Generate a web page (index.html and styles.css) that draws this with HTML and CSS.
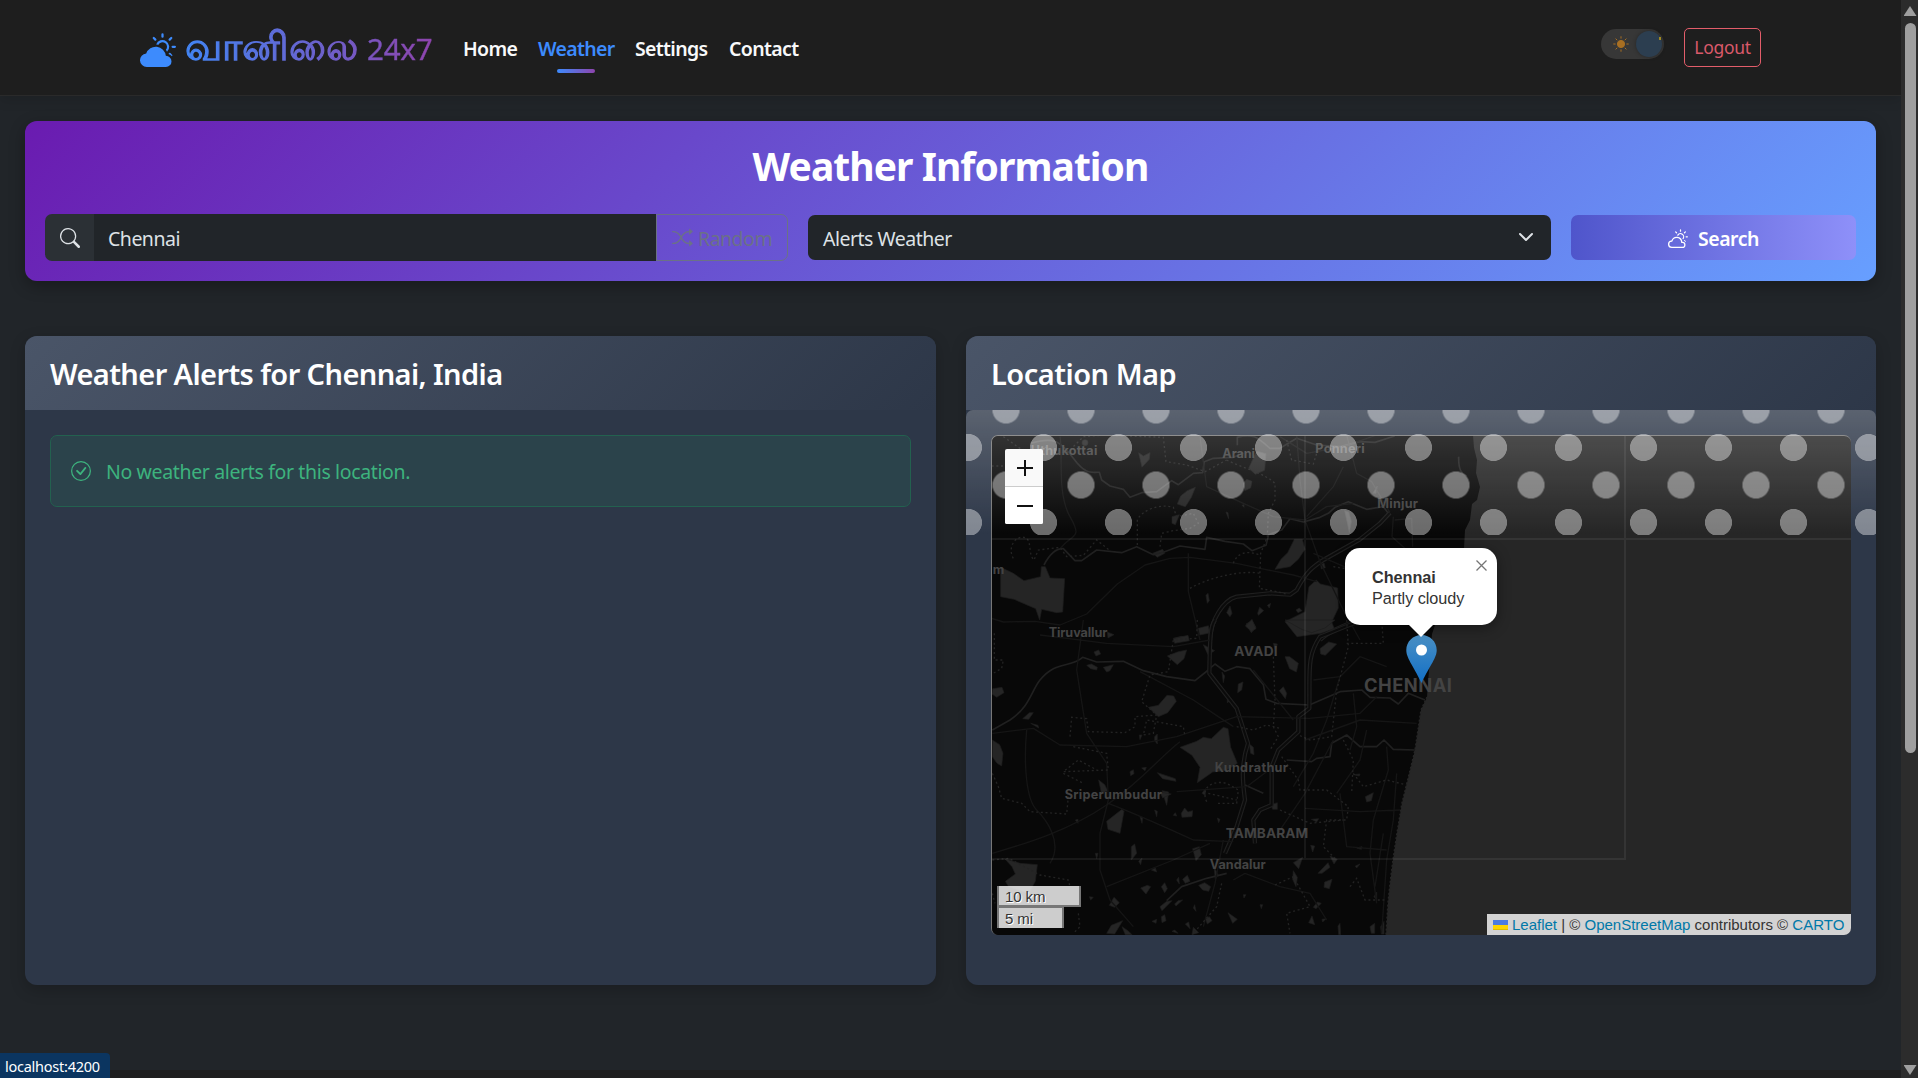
FILE: index.html
```html
<!DOCTYPE html>
<html lang="en">
<head>
<meta charset="utf-8">
<title>Weather Information</title>
<link rel="stylesheet" href="styles.css">
</head>
<body>
<svg class="defs" width="0" height="0" aria-hidden="true">
  <symbol id="sun-rays" viewBox="0 0 16 16">
    <path d="M10.5 1.5a.5.5 0 0 0-1 0v1a.5.5 0 0 0 1 0zm3.743 1.964a.5.5 0 1 0-.707-.707l-.708.707a.5.5 0 0 0 .708.708zm-7.779-.707a.5.5 0 0 0-.707.707l.707.708a.5.5 0 1 0 .708-.708zm1.734 3.374a2 2 0 1 1 3.296 2.198q.3.423.516.898a3 3 0 1 0-4.84-3.225q.529.017 1.028.129m4.484 4.074c.6.215 1.125.59 1.522 1.072a.5.5 0 0 0 .039-.742l-.707-.707a.5.5 0 0 0-.854.377M14.5 6.5a.5.5 0 0 0 0 1h1a.5.5 0 0 0 0-1z"/>
  </symbol>
</svg>
<div class="page">
  <header class="topbar">
    <a class="brand">
      <svg class="brand-icon" viewBox="0 0 16 16"><path d="M11.473 11a4.5 4.5 0 0 0-8.72-.99A3 3 0 0 0 3 16h8.5a2.5 2.5 0 0 0 0-5z"/><use href="#sun-rays"/></svg>
      <span class="brand-text"><span class="brand-tamil">வானிலை</span> <span class="brand-num">24x7</span></span>
    </a>
    <nav class="nav">
      <a class="nav-link home">Home</a>
      <a class="nav-link weather active">Weather</a>
      <a class="nav-link settings">Settings</a>
      <a class="nav-link contact">Contact</a>
    </nav>
    <div class="switch">
      <svg class="switch-sun" viewBox="0 0 16 16"><circle cx="8" cy="8" r="3.600"/><path d="M8 .3v2.300M8 13.400v2.300M.3 8h2.300M13.400 8h2.300M2.600 2.600l1.600 1.600M11.800 11.800l1.600 1.600M13.400 2.600l-1.600 1.600M4.200 11.800l-1.600 1.600"/></svg>
      <span class="switch-knob"></span>
      <span class="switch-star"></span>
    </div>
    <button class="logout">Logout</button>
  </header>

  <main class="content">
    <section class="banner">
      <h1 class="banner-title">Weather Information</h1>
      <div class="search-row">
        <div class="input-group">
          <span class="input-icon"><svg viewBox="0 0 16 16"><path d="M11.742 10.344a6.5 6.5 0 1 0-1.397 1.398h-.001q.044.06.098.115l3.85 3.85a1 1 0 0 0 1.415-1.414l-3.85-3.85a1 1 0 0 0-.115-.1zM12 6.5a5.5 5.5 0 1 1-11 0 5.5 5.5 0 0 1 11 0"/></svg></span>
          <span class="input-text">Chennai</span>
          <span class="random"><svg viewBox="0 0 16 16"><path d="M0 3.5A.5.5 0 0 1 .5 3H1c2.202 0 3.827 1.24 4.874 2.418.49.552.865 1.102 1.126 1.532.26-.43.636-.98 1.126-1.532C9.173 4.24 10.798 3 13 3v1c-1.798 0-3.173 1.01-4.126 2.082A9.6 9.6 0 0 0 7.556 8a9.6 9.6 0 0 0 1.317 1.918C9.828 10.99 11.204 12 13 12v1c-2.202 0-3.827-1.24-4.874-2.418A10.6 10.6 0 0 1 7 9.05c-.26.43-.636.98-1.126 1.532C4.827 11.76 3.202 13 1 13H.5a.5.5 0 0 1 0-1H1c1.798 0 3.173-1.01 4.126-2.082A9.6 9.6 0 0 0 6.444 8a9.6 9.6 0 0 0-1.317-1.918C4.172 5.01 2.796 4 1 4H.5a.5.5 0 0 1-.5-.5"/><path d="M13 5.466V1.534a.25.25 0 0 1 .41-.192l2.36 1.966c.12.1.12.284 0 .384l-2.36 1.966a.25.25 0 0 1-.41-.192m0 9v-3.932a.25.25 0 0 1 .41-.192l2.36 1.966c.12.1.12.284 0 .384l-2.36 1.966a.25.25 0 0 1-.41-.192"/></svg><span>Random</span></span>
        </div>
        <div class="select"><span>Alerts Weather</span><svg viewBox="0 0 16 16"><path d="m2 5 6 6 6-6"/></svg></div>
        <button class="search-btn"><svg viewBox="0 0 16 16"><path d="M7 8a3.5 3.5 0 0 1 3.5 3.555.5.5 0 0 0 .624.492A1.503 1.503 0 0 1 13 13.5a1.5 1.5 0 0 1-1.5 1.5H3a2 2 0 1 1 .1-3.998.5.5 0 0 0 .51-.375A3.5 3.5 0 0 1 7 8m4.473 3a4.5 4.5 0 0 0-8.72-.99A3 3 0 0 0 3 16h8.5a2.5 2.5 0 0 0 0-5z"/><use href="#sun-rays"/></svg><span>Search</span></button>
      </div>
    </section>

    <div class="cards">
      <section class="card">
        <h2 class="card-head alerts-title"><span>Weather Alerts for Chennai, India</span></h2>
        <div class="card-body">
          <div class="alert"><svg viewBox="0 0 16 16"><path d="M8 15A7 7 0 1 1 8 1a7 7 0 0 1 0 14m0 1A8 8 0 1 0 8 0a8 8 0 0 0 0 16"/><path d="m10.97 4.97-.02.022-3.473 4.425-2.093-2.094a.75.75 0 0 0-1.06 1.06L6.97 11.03a.75.75 0 0 0 1.079-.02l3.992-4.99a.75.75 0 0 0-1.071-1.05"/></svg><span>No weather alerts for this location.</span></div>
        </div>
      </section>

      <section class="card">
        <h2 class="card-head map-title"><span>Location Map</span></h2>
        <div class="card-body map-body">
          <div class="map">
            <svg class="map-canvas" viewBox="991 435 860 500">
              <path class="land" d="M991 435H1473L1474 448 1477 460 1476 473 1480 487 1477 500 1472 504 1470 520 1465 530 1464 548 1450 585 1436 622 1432 634 1429 670 1427 697 1421 710 1415 750 1407 783 1402 803 1397 833 1393 860 1390 884 1388 903 1386 935H991Z"/>
              <path class="shore" d="M1427 697 1421 710 1415 750 1407 783 1402 803 1397 833 1393 860 1390 884 1388 903 1386 935"/>
              <g transform="translate(960 320) scale(.33333)">
                <g class="lake">
                  <path d="M122 742l38 18 32 22 50-12 2-30 12 0 14 34 44 2-6 100-18 2-45-10-6 32-12-34-65-28-40-8z"/>
                  <path d="M945 748l18-30 20-20 20-40 24 0 8 30-20 30-25 22z"/>
                  <path d="M975 905l60-30 12-75 22-20 12 12 52 12 2 60-20 42 8 20-40 14-72 10z"/>
                  <path d="M652 552l10-24 20-16 24-10-12 30-18 28z"/>
                  <path d="M866 445l24-52 28 8-4 50-28 12zM536 398l14 10 20-10-2 20-22 24zM850 490l10-12 16 6-4 20-18 8zM636 590l22-6-12 30-10-4zM1238 520l14-22-4 22z"/>
                  <path d="M1154 572l12 4 8 28-6 34-6-30z"/>
                  <path d="M800 878l10-20 6 22-6 10zM858 912l18-10 12 20-14 16zM893 880l6-18 12 10-16 14zM738 826l6-6 4 22-6 8zM922 856l10-6-4 14zM715 925l30-8 4 22-30 6zM1008 870l10-6 8 8-12 6zM1082 735l10-6 4 14-12 4zM798 576l6 2 2 18zM846 556l6-2v8zM640 955l24-6 20 4v7z"/>
                  <circle cx="375" cy="368" r="9"/><path d="M578 700l30-12 6 12-22 12z"/>
                </g>
                <g class="river">
                  <path d="M210 370C280 350 300 360 340 415S400 455 418 457L425 480 450 498 490 508 510 532 545 518 590 515 635 482 655 494 700 460 728 458 733 425 760 415 820 412 850 400"/>
                  <path d="M252 735C270 700 290 685 310 686L345 722 365 722 410 690 485 698 530 680 580 704 612 696 660 678 735 688 740 652 795 664 850 672 876 692 918 676 926 644 965 630 990 596 1030 606 1080 592 1105 580 1125 562 1165 545 1220 568 1270 560 1285 580"/>
                  <path d="M830 352C880 340 890 350 930 385H960L1010 355 1070 375 1140 380 1200 365 1245 367 1304 348M832 352v24M1496 410C1495 450 1505 462 1520 468"/>
                </g>
                <g class="road-double">
                  <path d="M750 960C752 900 790 840 830 830L930 820 990 824 1010 810C1040 752 1060 740 1090 720L1200 658 1260 610 1290 578M1080 960C1110 930 1160 915 1225 885"/>
                </g>
                <g class="road-core">
                  <path d="M750 960C752 900 790 840 830 830L930 820 990 824 1010 810C1040 752 1060 740 1090 720L1200 658 1260 610 1290 578M1080 960C1110 930 1160 915 1225 885"/>
                </g>
                <g class="road">
                  <path d="M300 350C310 400 290 520 330 590S335 640 300 686M685 700v115L720 960M690 815M95 895L130 906 225 904 300 915L380 882 472 792 555 735 630 715 690 712 830 730 900 745 1000 765 1070 785"/>
                  <path d="M1010 345L1020 480 1035 600 1080 725 1150 870 1200 960M720 350L740 500 850 550 940 590 1035 600 1100 560 1180 550M1060 700L1200 760 1300 790M960 350L1040 400 1150 380 1250 345M1160 345L1190 460 1235 485 1290 578M1040 590L1120 500 1150 440"/>
                </g>
                <g class="boundary">
                  <path d="M130 350L180 385 210 410 250 380 320 400 370 350 430 345 610 352 618 425 680 435 735 455 800 420"/>
                  <path d="M95 438h50M160 715C140 680 170 640 200 655 215 670 205 705 222 720L235 690 300 682 320 710 370 706 410 660 450 692"/>
                  <path d="M532 675V600C545 570 600 550 640 562L650 590 700 580 715 610 690 625 640 632 605 640 600 680"/>
                  <path d="M800 420C850 445 915 460 945 490L945 540 925 580 922 650 902 700 898 805 950 815 980 822M820 730C830 700 860 690 895 704M690 805C750 770 850 750 900 760M980 360L995 420 1060 432 1070 400M1120 740l60 10"/>
                </g>
                <g class="road"><path d="M1300 590L1296 650 1340 690M1304 600L1355 595 1358 680"/></g>
                <g class="label">
                  <text x="212" y="404" font-size="38" textLength="200">Uthukottai</text>
                  <text x="787" y="414" font-size="38" textLength="98">Arani</text>
                  <text x="1066" y="399" font-size="38" textLength="148">Ponneri</text>
                  <text x="1252" y="565" font-size="38" textLength="122">Minjur</text>
                  <text x="98" y="763" font-size="38">m</text>
                </g>
              </g>
              <g transform="translate(960 620) scale(.33333)">
                <g class="lake">
                  <path d="M660 382l50-18 20-12 24 4 36-34 14 4 8 56 20 48-34 22-40 4-46 32 8-46-24-36z"/>
                  <path d="M565 262l30-6 26-30 20 2 8 16-26 34-28 12zM97 360l22 14 10 26-4 38-14-8-14-20z"/>
                  <path d="M440 604l46-36 6 6-12 66-36-12zM134 716l46 14 52 4-6 50-20 36-60-20-10-16 30-22-10-22z"/>
                  <path d="M98 206l28-4 6 16-22 14-14-10zM188 296l20-18 12 0-14 20zM212 310l22 6 2 8zM380 136l14-4 18 10-2 8-18-4zM430 142l30-8-10 18-10 4zM402 96l14-6 6 12-14 6z"/>
                  <path d="M640 56l44-10 4 16-44 8zM622 108l30-12 28-6-8 26-20 18zM730 74l34 18-20 12zM856 18l20-20 12 28-14 8zM975 0h150l-30 24-40 14-30-10z"/>
                  <path d="M835 192l14-6-4 24-12 8zM958 212l12-12 10 20-4 16zM975 110l14 0 26 20-6 26-20-10zM1080 86l26-20 24 6-20 20-14 14-14-4zM786 156l8 12-4 20zM940 70l12 2-6 20zM802 230l6 14-6 4z"/>
                  <path d="M416 480l18 14 10 20-20 4zM510 455l10-6 2 12-10 6zM592 458l54 18 2 8-40-8zM545 444l14-2-4 10zM584 350l8-8v30l-8-10zM538 345l8 0-6 14zM664 580l10-16 10 12 14-4-2 18-30 2zM584 570l8 4-2 16zM540 590l8 2-2 18zM640 586l6-8 4 10zM606 512l20 4-6 40zM868 372l12 10 2 22-10-4zM772 594l8 4-4 10zM726 520l10-14v20z"/>
                  <path d="M514 680l10-8 6 28-16 20zM698 686l20-6 6 24-16 18zM536 724l10-10-4 20zM406 700l8 0-4 16zM346 600l8-2v12zM716 796l18-8 18 12-6 14-18-4zM650 780l6-8 2 20zM668 778l14-12 8 18-14 6zM542 804l20-8 10 4-14 22zM604 800l10-12 8 18-8 12zM574 750l12-6 4 12zM448 856l14-24 16 16-14 14zM388 830l12 2-8 8zM600 860l20-16 16-2-30 30zM644 852l10-10 14-2-20 18z"/>
                  <path d="M440 940l14-24 34-14-24 40zM486 920l20 14 10 10h-20zM576 904l14-6-2 12zM604 890l10-6 4 18-12 6zM636 934l8-4 10 10zM700 864l4-10 4 20zM736 896l12-6 8 12-14 10zM676 912l10-6 4 20zM804 878l28 20-14 12zM850 824l8 0-6 10zM900 854l8 0-4 12zM762 740l12 24-8 14zM700 922l16 16-20 6z"/>
                  <path d="M1000 728l28-16-12 34zM1000 752l12 20-4 28-10-22zM1052 676l12 2-6 18zM1074 760l30-32 6 14-24 18zM1094 786l22-8-8 28-16-4zM1110 708l22 10-10 14zM1190 684l16-4-2 8zM934 554l18-6v20h-14zM1054 598l22-2-6 10zM1216 530l24-12-6 24-14 4zM1180 464l20-2-2 6zM1060 862l12-16 12 4-16 16zM1046 908l10-20 8 26zM1086 898l12-2-10 10zM1134 918l6-8 2 34h-6zM1242 830l8-14v24zM1230 920l14-10v30h-10zM1262 920l10-16v38h-8zM1186 738l14-6-10 12z"/>
                  <path d="M442 36l20 8-18 10zM600 516l34 6-26 12z"/>
                </g>
                <g class="river">
                  <path d="M97 330L150 300C210 260 215 210 240 180 290 120 330 145 368 112L410 126 490 124 550 152 620 170 705 182 745 150 765 132 795 154 830 140 870 146 910 194 918 238 950 250 1048 255 1095 235 1140 215 1205 210 1230 232 1290 234 1315 252 1345 220 1395 240"/>
                  <path d="M980 420L1055 425 1070 415 1110 410 1115 370 1160 345 1200 380 1250 380 1272 360 1300 388 1365 390M620 842L665 800 740 775 800 760M855 495L910 520"/>
                </g>
                <g class="road-double">
                  <path d="M765 0C750 20 750 60 748 160L830 265 864 370C840 440 850 500 855 540L830 620 795 700M1210 0C1150 20 1110 40 1080 50 1040 110 1050 150 1048 265L1015 290V335L955 390 935 440V555L900 570 880 600 885 670"/>
                </g>
                <g class="road-core">
                  <path d="M765 0C750 20 750 60 748 160L830 265 864 370C840 440 850 500 855 540L830 620 795 700M1210 0C1150 20 1110 40 1080 50 1040 110 1050 150 1048 265L1015 290V335L955 390 935 440V555L900 570 880 600 885 670"/>
                </g>
                <g class="road">
                  <path d="M370 0L350 150 380 340 440 430 445 540 420 640 420 750 450 840 520 920M240 45L440 70 640 80 750 60M540 155L700 240 820 320M97 340L220 325 300 375 500 380 650 350 830 290 1048 295 1200 280 1250 230"/>
                  <path d="M97 700C200 670 330 630 440 555S600 410 660 365M200 330C190 440 200 540 230 570S310 670 270 730M445 550C550 590 610 620 700 660L820 665M650 515L860 500 940 440M440 800L640 720 750 670M790 660L765 790M820 780L855 760 960 800 1050 820 1100 900M765 790 730 920"/>
                  <path d="M1060 180L1140 170 1200 110 1280 140M1140 170L1100 300 1060 400 1000 500M1180 220L1190 320 1170 390M1220 330L1200 420 1130 520M1035 565L1200 575 1320 570M1280 380L1285 450 1240 600 1230 700 1250 850M1310 460L1300 600 1280 720 1265 940M1270 640L1245 800M950 645L1035 520 1120 360M880 150L1000 300M1140 520L1160 680 1280 690M1035 360L1200 300 1370 310"/>
                </g>
                <g class="boundary">
                  <path d="M103 40V120H130L125 145 100 160M97 460L115 500 125 535 185 550 210 575 320 582 325 530M330 350L335 292 380 296 385 335 495 338 525 320 525 290 590 285 580 340 550 345 560 300 670 320 675 350M340 380L440 400 445 450 310 455 355 420 420 455M310 460L370 490"/>
                  <path d="M712 0L710 55 640 60 625 155 570 165 545 245 590 285M940 110L945 240 940 320 955 350 930 390M830 320L880 330 920 315 960 325M1160 0L1165 80 1130 210 1115 350 1050 360 1015 345M1160 70L1270 70 1265 0M740 545C720 500 760 480 800 490L835 510 830 550 770 550M965 410L1015 480 1020 510 1100 510 1165 560 1160 600 1100 600 1090 680 1130 720"/>
                  <path d="M1150 360L1180 420 1175 520M1180 460L1210 500 1280 480 1340 495M97 720L145 715 240 765 325 780 330 800M355 880L360 920 340 940M745 520L830 540M960 570L1050 610 1150 600M945 795L1000 770 1050 860 980 880 990 940M1170 800L1190 775 1215 840 1280 840M785 790L770 860 700 940M97 820L105 850"/>
                </g>
                <g class="label">
                  <text x="266" y="52" font-size="38" textLength="176">Tiruvallur</text>
                  <text x="823" y="108" font-size="41" textLength="130">AVADI</text>
                  <text x="1212" y="216" font-size="55" textLength="264">CHENNAI</text>
                  <text x="764" y="456" font-size="38" textLength="220">Kundrathur</text>
                  <text x="314" y="537" font-size="38" textLength="292">Sriperumbudur</text>
                  <text x="797" y="654" font-size="41" textLength="248">TAMBARAM</text>
                  <text x="749" y="746" font-size="38" textLength="168">Vandalur</text>
                </g>
              </g>
              <path class="seam" d="M1305 435V859M1625 435V859M991 539H1851M991 859H1626"/>
            </svg>
            <svg class="marker" viewBox="0 0 31 50"><defs><linearGradient id="pin" x1="0" y1="0" x2="0" y2="1"><stop offset="0" stop-color="#4a90c4"/><stop offset="1" stop-color="#126fc6"/></linearGradient></defs><path fill="url(#pin)" d="M15.500 1C7 1 .3 7.700.3 16c0 8 6 14 15.200 33C24.700 30 30.700 24 30.700 16 30.700 7.700 24 1 15.500 1z"/><circle cx="15.500" cy="16" r="5.500" fill="#fff"/></svg>
            <div class="popup">
              <b>Chennai</b><span>Partly cloudy</span>
              <svg class="popup-close" viewBox="0 0 11 11"><path d="M.5.5l10 10M10.500.5l-10 10"/></svg>
              <i class="popup-tip"></i>
            </div>
            <div class="scale"><span class="scale-km">10 km</span><span class="scale-mi">5 mi</span></div>
            <div class="attribution"><i class="flag"></i><a>Leaflet</a> | © <a>OpenStreetMap</a> contributors © <a>CARTO</a></div>
          </div>
          <div class="dots"></div>
          <div class="zoom">
            <span><svg viewBox="0 0 16 16"><path d="M0 8h16M8 0v16"/></svg></span>
            <span><svg viewBox="0 0 16 16"><path d="M0 8h16"/></svg></span>
          </div>
        </div>
      </section>
    </div>
  </main>
  <footer class="footer"></footer>
</div>
<div class="scrollbar"><i class="arrow-up"></i><i class="thumb"></i><i class="arrow-down"></i></div>
<div class="status">localhost:4200</div>
</body>
</html>
```
FILE: styles.css
```css
* { box-sizing: border-box; }
body {
  margin: 0; height: 1078px; display: flex; overflow: hidden; position: relative;
  background: #212529; color: #dee2e6;
  font-family: "Noto Sans", "Open Sans", sans-serif; font-size: 19.500px; letter-spacing: -.5px;
}
.defs { position: absolute; }
svg { fill: currentColor; flex: none; display: block; }
button { font: inherit; letter-spacing: inherit; margin: 0; padding: 0; }
.page { width: 1901px; display: flex; flex-direction: column; }

.topbar {
  height: 96px; padding: 0 140px; display: flex; align-items: center;
  background: #1e1e1e; border-bottom: 1px solid #2a2a2a; box-shadow: 0 4px 12px rgba(0,0,0,.12);
}
.brand { display: flex; align-items: center; width: 307px; height: 68px; margin-top: 2px; }
.brand-icon { width: 36px; height: 36px; color: #3d8bfd; margin-right: 9px; }
.brand-text {
  display: flex; align-items: baseline; gap: 9px; white-space: nowrap; line-height: 64px; margin-top: -4px;
  background: linear-gradient(90deg, #4285f4, #8e44ad); -webkit-background-clip: text; background-clip: text; color: transparent;
}
.brand-tamil { font-size: 39px; letter-spacing: 0; -webkit-text-stroke: 1.300px transparent; }
.brand-num { font-size: 29.500px; font-weight: 450; letter-spacing: -.2px; -webkit-text-stroke: .4px transparent; }
.nav { display: flex; gap: 20px; margin-left: 16px; align-self: stretch; }
.nav-link { position: relative; color: #f8f9fa; font-weight: 600; line-height: 97px; white-space: nowrap; letter-spacing: -.65px; }
.home { width: 55px; } .weather { width: 77px; } .settings { width: 74px; } .contact { width: 71px; }
.nav-link.active { color: #3d8bfd; }
.nav-link.active::after {
  content: ""; position: absolute; left: 19px; top: 69px; width: 38px; height: 4px; border-radius: 2px;
  background: linear-gradient(90deg, #3d8bfd, #8e44ad);
}
.switch {
  position: relative; width: 63px; height: 30px; margin: -8px 20px 0 auto; border-radius: 15px;
  background: #373737; display: flex; align-items: center; padding-left: 12px;
}
.switch-sun { width: 16px; height: 16px; color: #a86f22; stroke: currentColor; stroke-width: 1; }
.switch-knob { width: 26px; height: 26px; border-radius: 50%; background: #2c3e50; margin-left: 7px; box-shadow: 0 0 4px rgba(0,0,0,.3); }
.switch-star { position: absolute; left: 58px; top: 8px; width: 2px; height: 3px; background: #a08a22; }
.logout {
  width: 77px; height: 39px; border: 1px solid #e35d6a; border-radius: 5px; background: none; color: #d9596a;
  font-size: 17.500px; line-height: 37px; letter-spacing: -.3px;
}

.content { padding: 25px 25px 0; height: 974px; }
.banner {
  height: 160px; width: 1851px; border-radius: 12px; padding: 18px 20px 20px;
  background: linear-gradient(135deg, #6a1bb0, #679fff); box-shadow: 0 5px 16px rgba(0,0,0,.3);
}
.banner-title { margin: 0; height: 75px; line-height: 54px; text-align: center; color: #fff; font-size: 39px; font-weight: 700; letter-spacing: -.95px; white-space: nowrap; }
.search-row { display: flex; align-items: center; gap: 20px; }
.input-group { display: flex; width: 743px; height: 47px; }
.input-icon { width: 49px; background: #2b3035; border-radius: 7px 0 0 7px; display: flex; align-items: center; justify-content: center; }
.input-icon svg { width: 20px; height: 20px; }
.input-text { flex: 1; background: #212529; padding-left: 14px; line-height: 50px; }
.random {
  width: 132px; border: 1px solid rgba(108,117,125,.9); border-radius: 0 7px 7px 0;
  display: flex; align-items: center; gap: 5px; padding-left: 15px; color: rgba(108,117,125,.9); line-height: 46px;
}
.random svg { width: 21px; height: 21px; }
.random span { padding-top: 2px; }
.select { width: 743px; height: 45px; border-radius: 7px; background: #212529; display: flex; align-items: center; justify-content: space-between; padding: 1px 17px 0 15px; }
.select svg { width: 16px; height: 16px; fill: none; stroke: #dee2e6; stroke-width: 2; stroke-linecap: round; stroke-linejoin: round; margin-top: -3px; }
.search-btn {
  width: 285px; height: 45px; border: 0; border-radius: 7px; color: #fff; font-weight: 600;
  background: linear-gradient(90deg, #4f55cb, #8e90f9); display: flex; align-items: center; justify-content: center; gap: 10px;
}
.search-btn svg { width: 20px; height: 20px; }
.search-btn span { padding-top: 1px; }

.cards { display: flex; gap: 30px; margin-top: 55px; }
.card { width: 911px; height: 649px; border-radius: 12px; overflow: hidden; background: #2d3748; box-shadow: 0 5px 16px rgba(0,0,0,.2); }
.card:last-child { width: 910px; }
.card-head {
  margin: 0; height: 74px; padding-left: 25px; line-height: 76px; color: #fff; font-size: 29px; font-weight: 600;
  letter-spacing: -.6px; white-space: nowrap; background: linear-gradient(135deg, #4a5568, #2d3748);
}
.map-title { letter-spacing: -.5px; }
.card-body { padding: 25px; position: relative; height: 575px; }
.alert {
  height: 72px; border: 1px solid #23614f; border-radius: 7px; background: #2b434b; color: #3db37e;
  display: flex; align-items: center; gap: 15px; padding-left: 20px; letter-spacing: -.36px;
}
.alert svg { width: 20px; height: 20px; margin-top: -1px; }
.alert span { padding-top: 1px; }

.map { position: relative; width: 860px; height: 500px; border-radius: 7px; overflow: hidden; background: #262626; border-top: 1px solid #777; border-left: 1px solid #777; letter-spacing: 0; font-family: "Liberation Sans", Arial, sans-serif; }
.map-canvas { position: absolute; left: -1px; top: -1px; width: 860px; height: 500px; fill: none; }
.land { fill: #080808; }
.shore { stroke: #262626; stroke-width: 1.500; stroke-dasharray: 2 2; }
.lake { fill: #252525; stroke: #1c1c1c; stroke-width: 2; stroke-linejoin: round; }
.river { stroke: #202020; stroke-width: 5; stroke-linejoin: round; }
.road { stroke: #151515; stroke-width: 4; stroke-linejoin: round; }
.road-double { stroke: #1f1f1f; stroke-width: 13; stroke-linejoin: round; }
.road-core { stroke: #0b0b0b; stroke-width: 6; stroke-linejoin: round; }
.boundary { stroke: #232323; stroke-width: 4; stroke-dasharray: 6 8; }
.label { fill: #434343; font-family: Inter, Lato, sans-serif; font-weight: 700; }
.seam { stroke: rgba(255,255,255,.065); stroke-width: 2; }
.marker { position: absolute; left: 414px; top: 198px; width: 31px; height: 50px; }
.popup {
  position: absolute; left: 353px; top: 112px; width: 152px; height: 77px; border-radius: 15px; background: #fff;
  color: #333; font-size: 16.250px; line-height: 21px; padding: 19px 0 0 27px; display: flex; flex-direction: column; white-space: nowrap;
  letter-spacing: -.05px; box-shadow: 0 3px 14px rgba(0,0,0,.4);
}
.popup-close { position: absolute; right: 10px; top: 12px; width: 11px; height: 11px; stroke: #757575; stroke-width: 1.300; }
.popup-tip { position: absolute; left: 63px; top: 76px; width: 26px; height: 13px; background: #fff; clip-path: polygon(0 0, 100% 0, 50% 100%); }
.scale { position: absolute; left: 5px; bottom: 7px; display: flex; flex-direction: column; font-size: 15px; letter-spacing: -.1px; color: #333; }
.scale span { height: 21px; line-height: 22px; padding-left: 6px; border: 2px solid #777; border-top: 0; background: rgba(255,255,255,.8); text-shadow: 1px 1px #fff; }
.scale-km { width: 84px; }
.scale .scale-mi { width: 67px; height: 22px; margin-top: -1px; border: 2px solid #777; border-bottom: 0; line-height: 21px; }
.attribution { position: absolute; right: 0; bottom: 0; width: 364px; height: 21px; background: rgba(255,255,255,.8); color: #333; font-size: 15px; line-height: 21px; white-space: nowrap; padding-left: 6px; }
.attribution a { color: #0078a8; }
.flag { display: inline-block; width: 15px; height: 10px; background: linear-gradient(#4c7be1 50%, #ffd500 50% 90%, #e0bc00 90%); margin-right: 4px; }
.dots {
  position: absolute; left: 0; top: 0; width: 910px; height: 125px; border-radius: 7px 7px 0 0;
  background:
    radial-gradient(circle, rgba(255,255,255,.4) 13.200px, transparent 13.800px) 2.500px -37.500px / 75px 75px,
    radial-gradient(circle, rgba(255,255,255,.4) 13.200px, transparent 13.800px) -35px 0 / 75px 75px,
    linear-gradient(rgba(255,255,255,.22), rgba(255,255,255,0));
}
.zoom { position: absolute; left: 39px; top: 39px; width: 38px; height: 75px; border-radius: 2px; overflow: hidden; display: flex; flex-direction: column; background: #f9f9f9; }
.zoom span { height: 37px; display: flex; align-items: center; justify-content: center; padding-left: 2px; }
.zoom span + span { height: 38px; border-top: 1px solid #ccc; background: #fff; padding-top: 1px; }
.zoom svg { width: 16px; height: 16px; stroke: #111; stroke-width: 2; }
.footer { height: 8px; background: #1f1f20; }

.scrollbar { width: 17px; height: 1078px; background: #2c2c2c; display: flex; flex-direction: column; align-items: center; padding: 6px 0 3px 1px; }
.arrow-up { width: 13px; height: 10px; background: #9f9f9f; clip-path: polygon(50% 0, 100% 100%, 0 100%); }
.arrow-down { width: 13px; height: 10px; margin-top: auto; background: #9f9f9f; clip-path: polygon(0 0, 100% 0, 50% 100%); }
.thumb { width: 11px; height: 730px; margin-top: 7px; border-radius: 6px; background: #9f9f9f; }
.status { position: absolute; left: 0; bottom: 0; width: 110px; height: 25px; padding-left: 5px; border-radius: 0 4px 0 0; background: #0b3560; color: #fff; font-size: 14.500px; line-height: 26px; letter-spacing: -.25px; white-space: nowrap; }
```
